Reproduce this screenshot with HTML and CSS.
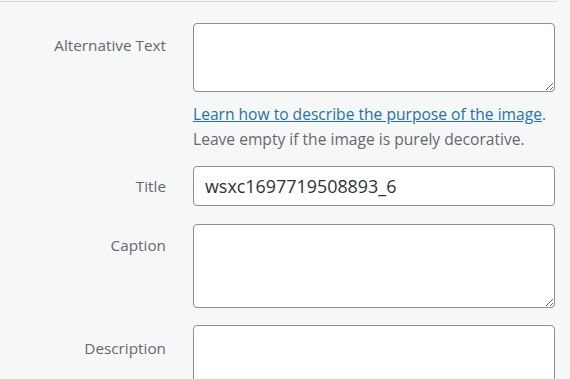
FILE: index.html
```html
<!DOCTYPE html>
<html lang="en">
<head>
<meta charset="utf-8">
<title>Attachment details</title>
<link rel="stylesheet" href="styles.css">
</head>
<body>
<div class="divider"></div>
<div class="settings">
  <div class="row row-alt">
    <label class="label" for="alt">Alternative Text</label>
    <div class="field">
      <textarea id="alt" class="textarea textarea-alt"></textarea>
      <p class="help"><a href="#" class="help-link">Learn how to describe the purpose of the image</a>.<br>Leave empty if the image is purely decorative.</p>
    </div>
  </div>
  <div class="row row-title">
    <label class="label" for="title">Title</label>
    <div class="field">
      <input id="title" class="input" type="text" value="wsxc1697719508893_6">
    </div>
  </div>
  <div class="row row-caption">
    <label class="label" for="caption">Caption</label>
    <div class="field">
      <textarea id="caption" class="textarea textarea-caption"></textarea>
    </div>
  </div>
  <div class="row row-desc">
    <label class="label" for="desc">Description</label>
    <div class="field">
      <textarea id="desc" class="textarea textarea-desc"></textarea>
    </div>
  </div>
</div>
</body>
</html>
```
FILE: styles.css
```css
html, body {
  margin: 0;
  padding: 0;
  background: #f6f7f7;
  overflow: hidden;
}
body {
  font-family: "Open Sans", "Noto Sans", sans-serif;
  font-size: 15.3px;
  color: #646970;
}
.divider {
  margin-top: 1px;
  width: 557px;
  height: 1px;
  background: #dcdcde;
}
.settings {
  display: flex;
  flex-direction: column;
}
.row {
  display: flex;
  column-gap: 27px;
  align-items: flex-start;
}
.row-alt { margin-top: 21px; }
.row-title { margin-top: 14px; }
.row-caption { margin-top: 18px; }
.row-desc { margin-top: 17px; }
.label {
  width: 166px;
  flex: none;
  text-align: right;
  line-height: 24px;
  padding-top: 10px;
  color: #646970;
}
.row-title .label { padding-top: 8px; }
.row-caption .label { padding-top: 9px; }
.row-desc .label { padding-top: 11px; }
.field {
  width: 362px;
  flex: none;
}
.textarea, .input {
  display: block;
  box-sizing: border-box;
  width: 362px;
  margin: 0;
  background: #fff;
  border: 1px solid #8c8f94;
  border-radius: 4px;
  font-family: inherit;
  font-size: 16px;
  color: #2c3338;
  outline: none;
}
.textarea-alt { height: 69px; }
.textarea-caption { height: 84px; }
.textarea-desc { height: 83px; }
.input {
  height: 40px;
  padding: 0 11px;
  font-size: 17.9px;
  color: #2c3338;
}
.help {
  margin: 10px 0 0;
  line-height: 25px;
  font-size: 15.6px;
  color: #646970;
}
.help-link {
  color: #2271b1;
  text-decoration: underline;
}
```
